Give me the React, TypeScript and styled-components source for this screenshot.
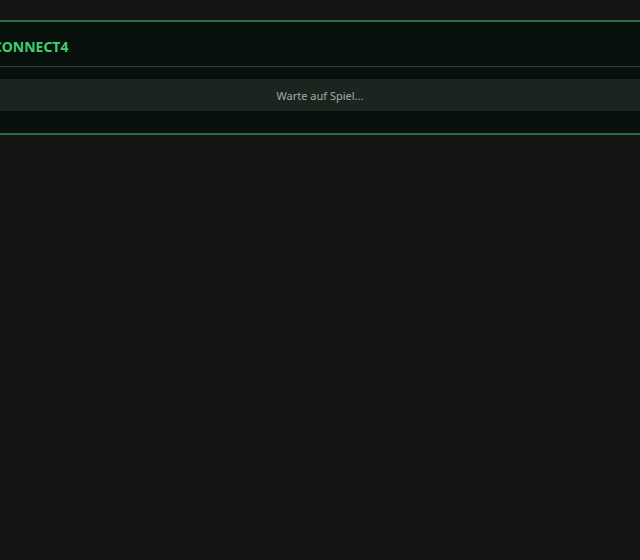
import styled, { createGlobalStyle } from 'styled-components'

export default function App() {
  return (
    <>
      <GlobalStyle />
      <Board>
        <BoardHeader>
          <Title>CONNECT4</Title>
        </BoardHeader>
        <Status>Warte auf Spiel...</Status>
      </Board>
    </>
  )
}

const GlobalStyle = createGlobalStyle`
  html, body {
    margin: 0;
    background: #141414;
    overflow: hidden;
  }
  body {
    font-family: "Noto Sans", "Open Sans", sans-serif;
  }
`

const Board = styled.section`
  margin: 20px -16px 0;
  background: #07100a;
  border-top: 2px solid #2a6b3f;
  border-bottom: 2px solid #2a6b3f;
  padding-bottom: 22px;
`

const BoardHeader = styled.header`
  display: flex;
  align-items: center;
  height: 45px;
  padding: 5px 9px 0;
  box-sizing: border-box;
  border-bottom: 1px solid #3a3d3a;
  margin-bottom: 12px;
`

const Title = styled.h1`
  margin: 0;
  font-size: 14px;
  font-weight: 700;
  color: #3ecf74;
`

const Status = styled.div`
  display: flex;
  align-items: center;
  justify-content: center;
  height: 32px;
  padding-top: 1px;
  box-sizing: border-box;
  background: #1c241f;
  color: #a8aaa8;
  font-size: 11px;
`
